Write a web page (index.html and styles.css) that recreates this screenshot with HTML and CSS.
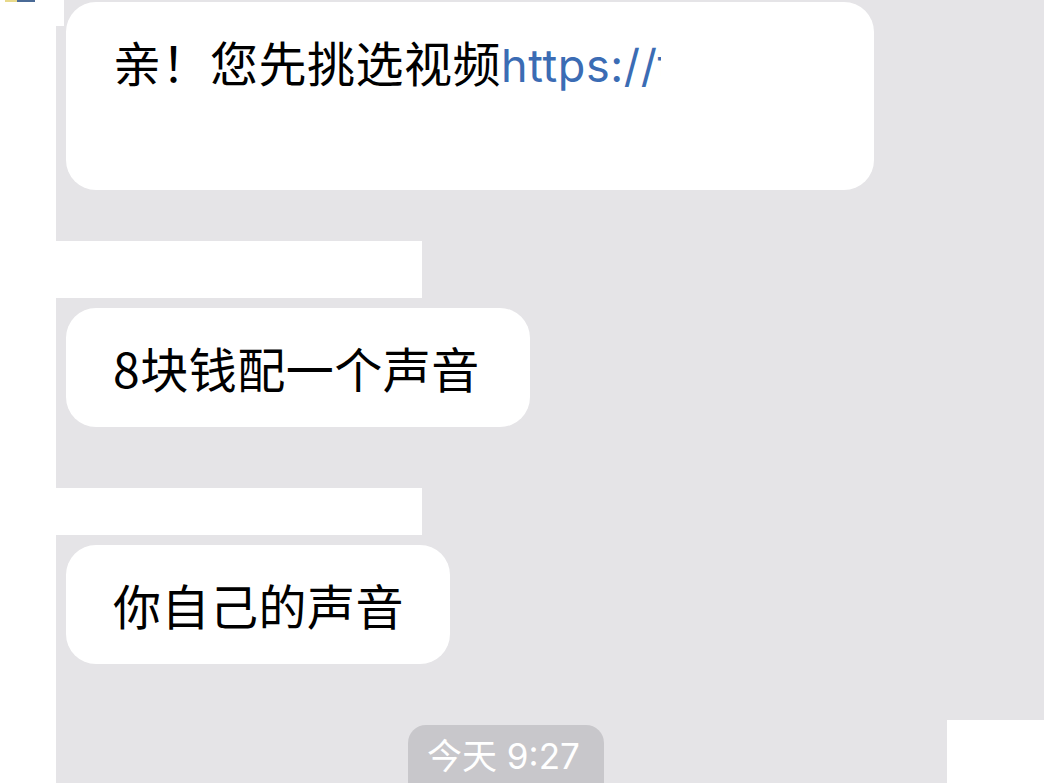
FILE: index.html
```html
<!DOCTYPE html>
<html lang="zh-CN">
<head>
<meta charset="utf-8">
<title>Chat</title>
<link rel="stylesheet" href="styles.css">
</head>
<body>
<div class="screen">
  <div class="gutter"></div>
  <div class="chat">
    <div class="bubble bubble-wide"><span class="clip">亲！您先挑选视频<span class="link">https://t</span></span></div>
    <div class="band band-a"></div>
    <div class="bubble">8块钱配一个声音</div>
    <div class="band band-b"></div>
    <div class="bubble bubble-tight">你自己的声音</div>
    <div class="stamp">今天 9:27</div>
    <div class="notch"></div>
    <div class="corner"></div>
  </div>
  <div class="topline"><span class="y"></span><span class="b"></span></div>
</div>
</body>
</html>
```

FILE: styles.css
```css
html, body {
  margin: 0;
  padding: 0;
  background: #fff;
}

.screen {
  position: relative;
  display: flex;
  width: 1044px;
  height: 783px;
  overflow: hidden;
  font-family: "Inter", "Noto Sans CJK SC", sans-serif;
}

.gutter {
  width: 56px;
  flex: none;
  background: #fff;
}

.chat {
  position: relative;
  flex: 1;
  background: #e5e4e7;
  display: flex;
  flex-direction: column;
  align-items: flex-start;
  padding-top: 2px;
}

.chat > * {
  flex-shrink: 0;
}

.bubble {
  margin-left: 10px;
  background: #fff;
  border-radius: 30px;
  padding: 25px 50px 25px 47px;
  font-size: 48px;
  line-height: 69px;
  color: #000;
  white-space: nowrap;
  letter-spacing: 0.5px;
  font-family: "Noto Sans CJK SC", sans-serif;
}

.bubble-tight {
  padding-right: 46px;
}

.bubble-wide {
  width: 711px;
  height: 138px;
  padding-right: 50px;
  box-sizing: content-box;
}

.clip {
  display: inline-block;
  width: 548px;
  overflow: hidden;
  vertical-align: top;
}

.link {
  color: #3b6cb4;
  font-family: "Inter", sans-serif;
  font-size: 45px;
  letter-spacing: 0.6px;
}

.band {
  width: 366px;
  background: #fff;
}

.band-a {
  margin-top: 51px;
  height: 57px;
  margin-bottom: 10px;
}

.band-b {
  margin-top: 61px;
  height: 47px;
  margin-bottom: 10px;
}

.stamp {
  margin-left: 352px;
  margin-top: 61px;
  width: 196px;
  box-sizing: border-box;
  background: #c8c7cb;
  color: #fff;
  border-radius: 18px;
  padding: 10px 0 30px 19px;
  font-size: 35px;
  line-height: 42px;
  font-family: "Inter", "Noto Sans CJK SC", sans-serif;
  white-space: nowrap;
}

.notch {
  position: absolute;
  left: 0;
  top: 0;
  width: 8px;
  height: 26px;
  background: #fff;
}

.corner {
  position: absolute;
  right: 0;
  top: 720px;
  width: 97px;
  height: 63px;
  background: #fff;
}

.topline {
  position: absolute;
  left: 0;
  top: 0;
  display: flex;
  height: 2px;
}

.topline .y {
  margin-left: 5px;
  width: 12px;
  background: #e8d98a;
}

.topline .b {
  width: 18px;
  background: #4a6a96;
}
```
